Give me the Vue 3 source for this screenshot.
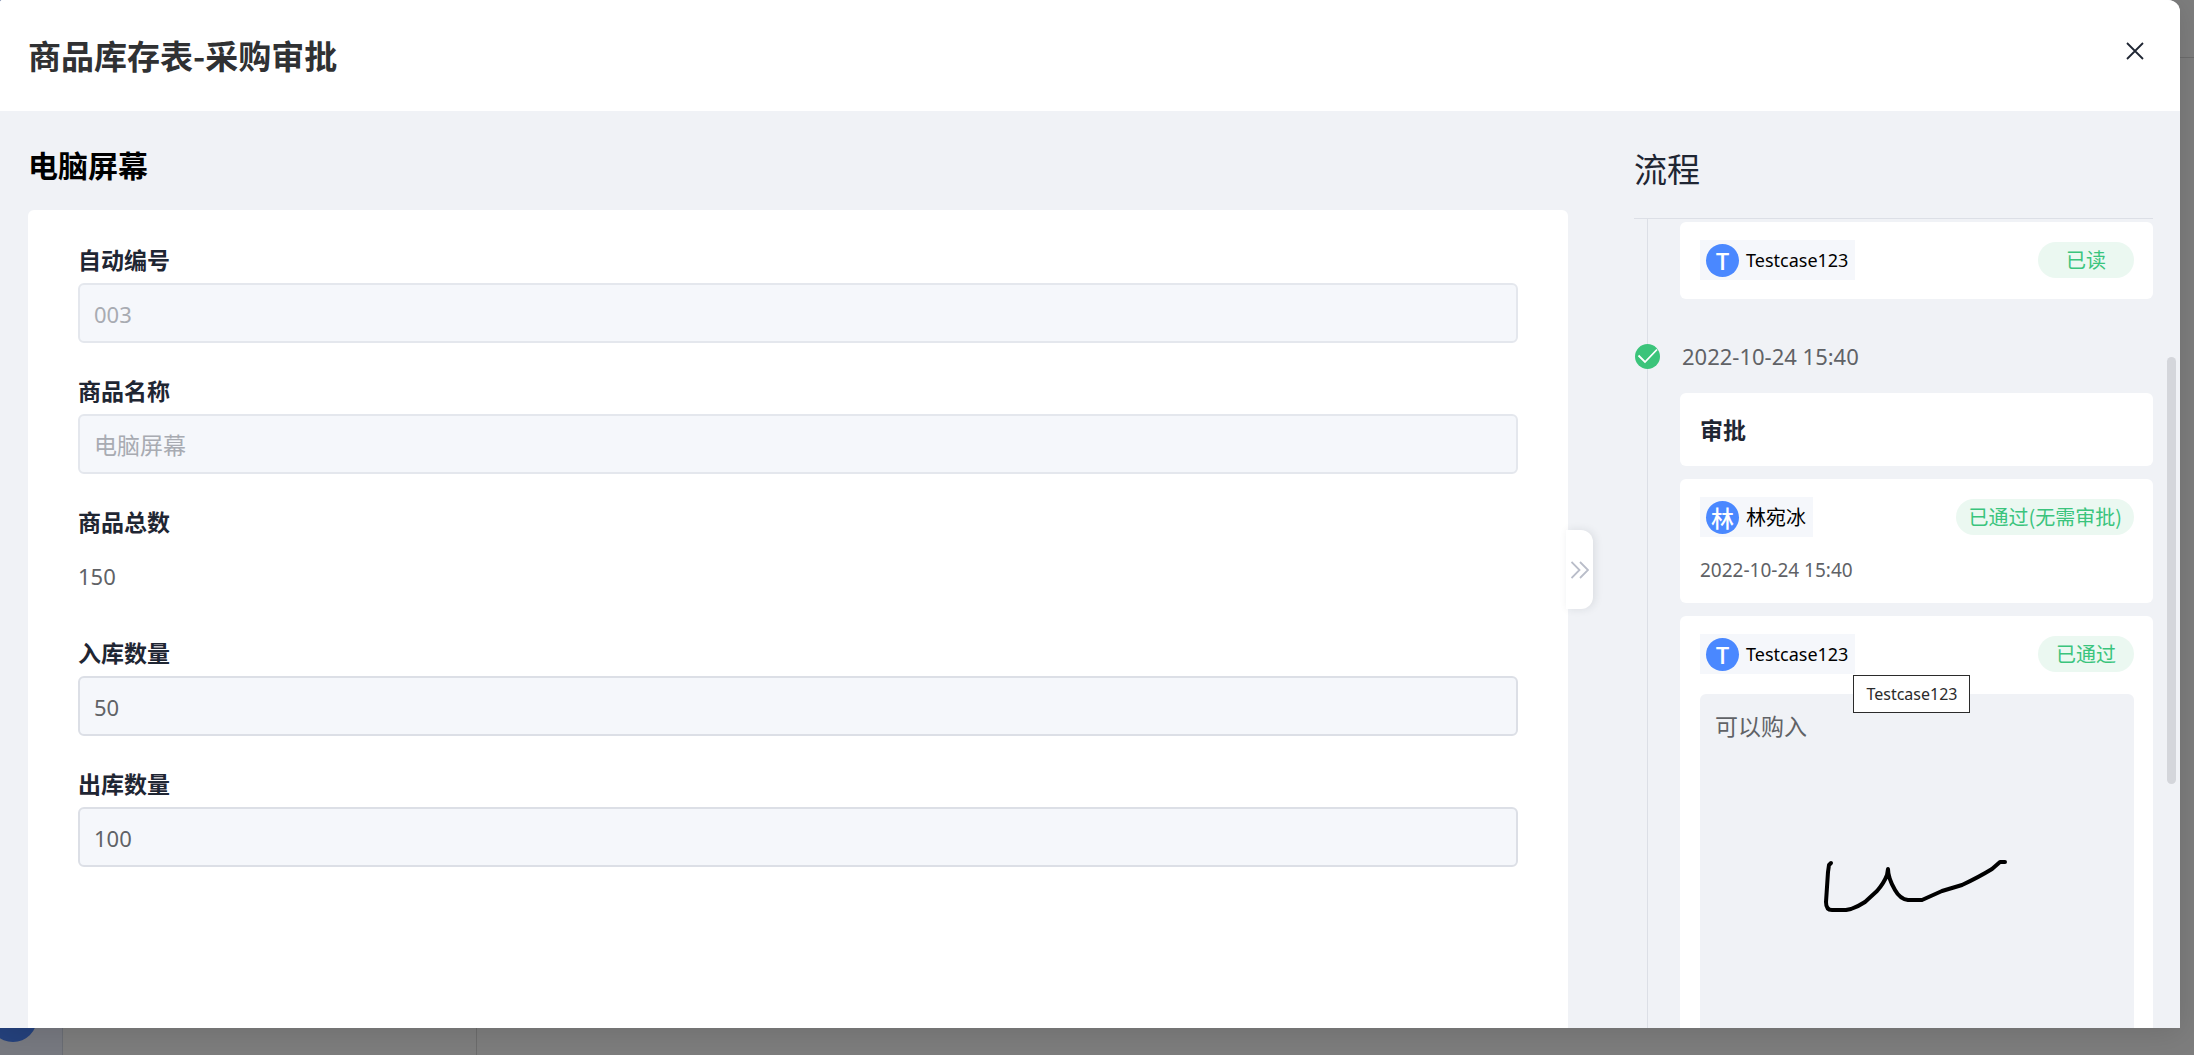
<template>
  <div class="page">
    <!-- page under the mask -->
    <div class="shell">
      <aside class="shell-nav">
        <span class="shell-logo"></span>
        <span class="shell-avatar"></span>
      </aside>
      <div class="shell-list"></div>
      <div class="shell-main">
        <div class="shell-bar"></div>
      </div>
    </div>

    <section class="modal" role="dialog" aria-labelledby="modal-title">
      <header class="modal-header">
        <h1 id="modal-title" class="modal-title">商品库存表-采购审批</h1>
        <button class="close" type="button" aria-label="关闭">
          <svg width="18" height="18" viewBox="0 0 18 18">
            <path d="M1 1L17 17M17 1L1 17" />
          </svg>
        </button>
      </header>

      <div class="modal-body">
        <main class="detail">
          <h2 class="detail-title">电脑屏幕</h2>
          <form class="form" @submit.prevent>
            <div v-for="field in fields" :key="field.id" class="field">
              <label class="field-label" :for="field.id">{{ field.label }}</label>
              <output v-if="field.type === 'text'" :id="field.id" class="field-text">{{ field.value }}</output>
              <input
                v-else
                :id="field.id"
                class="field-input"
                :class="{ muted: field.muted, latin: isLatin(field.value) }"
                :value="field.value"
                readonly
              />
            </div>
          </form>
          <button class="toggle" type="button" aria-label="收起" @click="open = !open">
            <svg width="18" height="18" viewBox="0 0 18 18">
              <path d="M0.500 1L8.500 9L0.500 17M9 1L17 9L9 17" />
            </svg>
          </button>
        </main>

        <aside v-show="open" class="flow">
          <h2 class="flow-title">流程</h2>
          <div class="timeline">
            <div class="card">
              <div class="row">
                <span class="user">
                  <span class="avatar">T</span>
                  <span class="name latin">Testcase123</span>
                </span>
                <span class="status">已读</span>
              </div>
            </div>

            <div class="node">
              <svg class="node-icon" width="25" height="25" viewBox="0 0 25 25">
                <circle cx="12.500" cy="12.500" r="12.500" />
                <path d="M3.500 11.500L10 18L22 5.500" />
              </svg>
              <time class="node-time">2022-10-24 15:40</time>
            </div>

            <div class="card card-title">审批</div>

            <div v-for="step in steps" :key="step.name" class="card">
              <div class="row">
                <span class="user">
                  <span class="avatar">{{ step.name[0] }}</span>
                  <span class="name" :class="{ latin: isLatin(step.name) }">{{ step.name }}</span>
                  <span v-if="step.comment" class="tooltip" role="tooltip">{{ step.name }}</span>
                </span>
                <span class="status">{{ step.status }}</span>
              </div>
              <time v-if="step.time" class="step-time">{{ step.time }}</time>
              <div v-if="step.comment" class="comment">
                <p class="comment-text">{{ step.comment }}</p>
                <svg class="sign" viewBox="0 0 434 320">
                  <path
                    d="M131 169L129 171L128 178L127 193L126 208Q126 216 132 216L146 216L151 215Q159 212 165 208L177 197Q184 189 187 181L188 175Q188 184 195 196Q200 205 208 206L222 206L242 197L262 191Q279 183 292 175L300 168L305 168"
                  />
                </svg>
              </div>
            </div>
          </div>
          <span class="scroll-thumb"></span>
        </aside>
      </div>
    </section>
  </div>
</template>

<script setup>
import { ref } from 'vue';

const open = ref(true);

const fields = ref([
  { id: 'code', label: '自动编号', value: '003', muted: true },
  { id: 'name', label: '商品名称', value: '电脑屏幕', muted: true },
  { id: 'total', label: '商品总数', value: '150', type: 'text' },
  { id: 'in', label: '入库数量', value: '50' },
  { id: 'out', label: '出库数量', value: '100' },
]);

const steps = ref([
  { name: '林宛冰', status: '已通过(无需审批)', time: '2022-10-24 15:40' },
  { name: 'Testcase123', status: '已通过', comment: '可以购入' },
]);

const isLatin = (text) => /^[\w\s-]+$/.test(text);
</script>

<style>
body {
  margin: 0;
  overflow: hidden;
}
</style>

<style scoped>
.page {
  position: relative;
  box-sizing: border-box;
  height: 100vh;
  padding: 0 14px 27px 0;
  background: #7d7d7d;
  font-family: "Noto Sans CJK SC", sans-serif;
  color: #1f2633;
}
h1,
h2,
p {
  margin: 0;
}
button {
  padding: 0;
  border: none;
  cursor: pointer;
}
svg {
  display: block;
  fill: none;
}
.shell {
  position: absolute;
  inset: 0;
  display: flex;
}
.shell-nav {
  display: flex;
  flex-direction: column;
  justify-content: space-between;
  box-sizing: border-box;
  width: 63px;
  padding-bottom: 13px;
  border-right: 1px solid #6a6d74;
  background: #777980;
}
.shell-logo {
  height: 60px;
  background: #24417c;
}
.shell-avatar {
  width: 48px;
  height: 48px;
  margin-left: -11px;
  border-radius: 50%;
  background: #24417c;
}
.shell-list {
  box-sizing: border-box;
  width: 414px;
  border-right: 1px solid #6c6c6c;
}
.shell-main {
  flex: 1;
}
.shell-bar {
  height: 57px;
  border-bottom: 1px solid #6c6c6c;
}
.modal {
  position: relative;
  display: flex;
  flex-direction: column;
  height: 100%;
  border-radius: 2px 12px 0 0;
  background: #f0f2f6;
  box-shadow: 0 4px 30px rgba(0, 0, 0, 0.12);
}
.modal-header {
  display: flex;
  justify-content: space-between;
  align-items: flex-start;
  padding: 31px 36px 32px 28px;
  border-radius: 2px 12px 0 0;
  background: #fff;
}
.modal-title {
  font-size: 33px;
  line-height: 48px;
  font-weight: bold;
  color: #303133;
}
.close {
  padding: 11px 0;
  background: none;
}
.close path {
  stroke: #1f2633;
  stroke-width: 1.8;
}
.modal-body {
  display: flex;
  flex: 1;
  gap: 66px;
  min-height: 0;
  padding: 0 27px 0 28px;
}
.detail {
  position: relative;
  display: flex;
  flex: 1;
  flex-direction: column;
  padding-top: 31px;
}
.detail-title {
  margin-bottom: 24px;
  font-size: 30px;
  line-height: 44px;
  font-weight: bold;
  color: #000;
}
.form {
  flex: 1;
  padding: 35px 50px 0;
  border-radius: 6px 6px 0 0;
  background: #fff;
}
.field {
  display: flex;
  flex-direction: column;
  gap: 10px;
  margin-bottom: 33px;
}
.field-label {
  font-size: 23px;
  line-height: 28px;
  font-weight: bold;
}
.field-input {
  box-sizing: border-box;
  width: 100%;
  height: 60px;
  padding: 0 14px;
  border: 2px solid #dcdfe6;
  border-radius: 6px;
  outline: none;
  background: #f5f7fb;
  font-family: "Noto Sans CJK SC", sans-serif;
  font-size: 23px;
  color: #606266;
}
.field-input.latin {
  padding-top: 2px;
  font-family: "Noto Sans", sans-serif;
  font-size: 22px;
}
.field-input.muted {
  border-color: #e4e7ed;
  color: #a8abb2;
}
.field-text {
  box-sizing: border-box;
  height: 60px;
  padding-top: 2px;
  font-family: "Noto Sans", sans-serif;
  font-size: 22px;
  line-height: 58px;
  color: #606266;
}
.toggle {
  position: absolute;
  top: 419px;
  right: -25px;
  display: flex;
  justify-content: center;
  align-items: center;
  width: 27px;
  height: 79px;
  border-radius: 0 12px 12px 0;
  background: #fff;
  box-shadow: 2px 0 8px rgba(31, 38, 51, 0.1);
}
.toggle path {
  stroke: #b9bdc9;
  stroke-width: 1.8;
}
.flow {
  position: relative;
  display: flex;
  flex: 0 0 519px;
  flex-direction: column;
  min-height: 0;
}
.flow-title {
  padding: 35px 0 28px;
  font-size: 33px;
  line-height: 44px;
  font-weight: normal;
}
.timeline {
  flex: 1;
  min-height: 0;
  padding: 3px 0 0 46px;
  border-top: 1px solid #dcdfe6;
  background: linear-gradient(#dcdfe6, #dcdfe6) 13px 0 / 1px 100% no-repeat;
  overflow: hidden;
}
.card {
  margin-bottom: 13px;
  padding: 18px 19px 19px 20px;
  border-radius: 6px;
  background: #fff;
}
.card-title {
  font-size: 23px;
  line-height: 36px;
  font-weight: bold;
}
.row {
  display: flex;
  justify-content: space-between;
  align-items: center;
}
.user {
  position: relative;
  display: flex;
  align-items: center;
  gap: 7px;
  height: 40px;
  padding: 0 7px 0 6px;
  background: #f5f7fb;
}
.avatar {
  width: 33px;
  border-radius: 50%;
  background: #4a88ff;
  font-size: 23px;
  font-weight: 500;
  line-height: 33px;
  text-align: center;
  color: #fff;
}
.name {
  font-size: 20px;
  line-height: 40px;
  color: #000;
}
.name.latin {
  font-family: "Noto Sans", sans-serif;
  font-size: 18px;
}
.status {
  box-sizing: border-box;
  min-width: 96px;
  padding: 0 12px;
  border-radius: 18px;
  background: #ebf8f1;
  font-size: 20px;
  line-height: 36px;
  text-align: center;
  color: #3ac47d;
}
.node {
  display: flex;
  align-items: center;
  gap: 22px;
  margin: 39px 0 19px -45px;
}
.node-icon circle {
  fill: #3bc47a;
}
.node-icon path {
  stroke: #fff;
  stroke-width: 1.8;
}
.node-time {
  font-family: "Noto Sans", sans-serif;
  font-size: 22px;
  line-height: 36px;
  color: #606266;
}
.step-time {
  display: block;
  margin-top: 19px;
  font-family: "Noto Sans", sans-serif;
  font-size: 19px;
  line-height: 28px;
  color: #606266;
}
.comment {
  position: relative;
  margin-top: 20px;
  padding: 13px 15px;
  height: 380px;
  border-radius: 6px;
  background: #f0f2f6;
}
.comment-text {
  font-size: 23px;
  line-height: 36px;
  color: #606266;
}
.sign {
  position: absolute;
  top: 0;
  left: 0;
  width: 100%;
}
.sign path {
  stroke: #000;
  stroke-width: 4;
  stroke-linecap: round;
  stroke-linejoin: round;
}
.tooltip {
  position: absolute;
  top: 41px;
  left: calc(100% - 2px);
  z-index: 1;
  padding: 0 12px;
  border: 1px solid #2b2b2b;
  background: #fff;
  font-family: "Noto Sans", sans-serif;
  font-size: 16px;
  line-height: 36px;
  color: #2b2b2b;
}
.scroll-thumb {
  position: absolute;
  top: 246px;
  right: -23px;
  width: 9px;
  height: 427px;
  border-radius: 5px;
  background: #d4d6db;
}
</style>
